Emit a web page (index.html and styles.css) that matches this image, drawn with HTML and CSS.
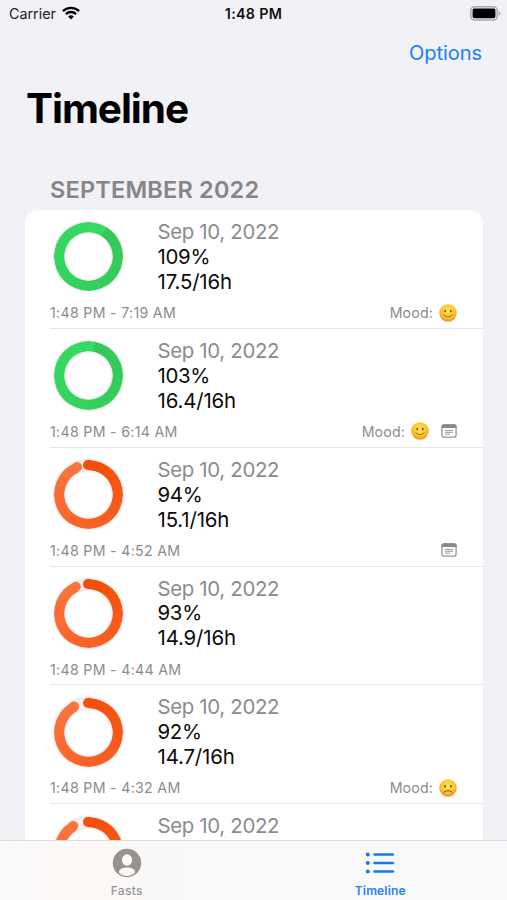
FILE: index.html
```html
<!DOCTYPE html>
<html lang="en">
<head>
<meta charset="utf-8">
<title>Timeline</title>
<link rel="stylesheet" href="styles.css">
</head>
<body>
<svg width="0" height="0" class="defs">
  <defs>
    <radialGradient id="face" cx=".5" cy=".4" r=".6">
      <stop offset="0" stop-color="#ffe45c"/><stop offset=".6" stop-color="#fdc92f"/><stop offset="1" stop-color="#f0940f"/>
    </radialGradient>
    <symbol id="smile" viewBox="0 0 18 18">
      <circle cx="9" cy="9" r="8.7" fill="url(#face)"/>
      <ellipse cx="6.3" cy="7.1" rx=".9" ry="1.3" fill="#7a4a10"/><ellipse cx="11.7" cy="7.1" rx=".9" ry="1.3" fill="#7a4a10"/>
      <path d="M4.8 11Q9 14.6 13.2 11" fill="none" stroke="#a8670f" stroke-width="1" stroke-linecap="round"/>
    </symbol>
    <symbol id="frown" viewBox="0 0 18 18">
      <circle cx="9" cy="9" r="8.7" fill="url(#face)"/>
      <ellipse cx="6" cy="7.3" rx=".9" ry="1.3" fill="#7a4a10"/><ellipse cx="12" cy="7.3" rx=".9" ry="1.3" fill="#7a4a10"/>
      <path d="M5.3 13.1Q9 10.5 12.7 13.1" fill="none" stroke="#8f560e" stroke-width="1.1" stroke-linecap="round"/>
    </symbol>
    <symbol id="note" viewBox="0 0 16 14">
      <rect x=".9" y=".9" width="14.2" height="12.2" rx="2.2" fill="none" stroke="#98989a" stroke-width="1.3"/>
      <path d="M.4 4V2.6Q.6.3 2.8.3H13.2Q15.4.3 15.6 2.6V4Z" fill="#8a8a8c"/>
      <path d="M4 6.4H12M4 8.3H12M4 10.2H9" stroke="#98989a" stroke-width="1"/>
    </symbol>
  </defs>
</svg>
<div class="screen">
  <header class="status">
    <div class="carrier"><span>Carrier</span>
      <svg width="18" height="14" viewBox="0 0 18 14" fill="none" stroke="#000" stroke-width="2.3">
        <path d="M.9 5.1A11.6 11.6 0 0 1 17.1 5.1M3.9 8.1A7.3 7.3 0 0 1 14.1 8.1"/>
        <path d="M9 13.6 6.1 10.6A4.2 4.2 0 0 1 11.9 10.6Z" fill="#000" stroke="none"/>
      </svg>
    </div>
    <div class="clock">1:48 PM</div>
    <svg class="battery" width="31" height="15" viewBox="0 0 31 15">
      <rect x=".8" y=".8" width="26.4" height="13.2" rx="3.8" fill="none" stroke="#aaaaae" stroke-width="1.5"/>
      <rect x="2.6" y="2.6" width="22.8" height="9.6" rx="1.8"/>
      <path d="M28.7 5.2Q30.5 6 30.5 7.4T28.7 9.6Z" fill="#aaaaae"/>
    </svg>
  </header>
  <nav class="navbar"><a>Options</a></nav>
  <h1>Timeline</h1>
  <h2>SEPTEMBER 2022</h2>
  <main class="card">
    <article class="row">
      <div class="top"><div class="ring done" style="--p:32deg"></div>
        <div class="facts"><p class="date">Sep 10, 2022</p><p class="pct">109%</p><p class="hours">17.5/16h</p></div></div>
      <div class="meta"><span class="span">1:48 PM - 7:19 AM</span><span class="mood">Mood: <svg class="emoji"><use href="#smile"/></svg></span></div>
    </article>
    <article class="row">
      <div class="top"><div class="ring done" style="--p:11deg"></div>
        <div class="facts"><p class="date">Sep 10, 2022</p><p class="pct">103%</p><p class="hours">16.4/16h</p></div></div>
      <div class="meta"><span class="span">1:48 PM - 6:14 AM</span><span class="mood">Mood: <svg class="emoji"><use href="#smile"/></svg><svg class="note"><use href="#note"/></svg></span></div>
    </article>
    <article class="row">
      <div class="top"><div class="ring part" style="--p:338.4deg"><i class="cap start"></i><i class="cap end"></i></div>
        <div class="facts"><p class="date">Sep 10, 2022</p><p class="pct">94%</p><p class="hours">15.1/16h</p></div></div>
      <div class="meta"><span class="span">1:48 PM - 4:52 AM</span><span class="mood"><svg class="note"><use href="#note"/></svg></span></div>
    </article>
    <article class="row">
      <div class="top"><div class="ring part" style="--p:335.5deg"><i class="cap start"></i><i class="cap end"></i></div>
        <div class="facts"><p class="date">Sep 10, 2022</p><p class="pct">93%</p><p class="hours">14.9/16h</p></div></div>
      <div class="meta"><span class="span">1:48 PM - 4:44 AM</span></div>
    </article>
    <article class="row">
      <div class="top"><div class="ring part" style="--p:332deg"><i class="cap start"></i><i class="cap end"></i></div>
        <div class="facts"><p class="date">Sep 10, 2022</p><p class="pct">92%</p><p class="hours">14.7/16h</p></div></div>
      <div class="meta"><span class="span">1:48 PM - 4:32 AM</span><span class="mood">Mood: <svg class="emoji"><use href="#frown"/></svg></span></div>
    </article>
    <article class="row">
      <div class="top"><div class="ring part" style="--p:330deg"><i class="cap start"></i><i class="cap end"></i></div>
        <div class="facts"><p class="date">Sep 10, 2022</p></div></div>
    </article>
  </main>
  <footer class="tabs">
    <div class="tab">
      <svg width="30" height="30" viewBox="0 0 30 30"><circle cx="15" cy="15" r="14.2" fill="#979390"/><ellipse cx="15" cy="12" rx="5.1" ry="5.7" fill="#fbf8f6"/><path d="M6.8 24.2C7.5 20.8 11 19.6 15 19.6S22.5 20.8 23.2 24.2C21 26.8 18 27.9 15 27.9S9 26.8 6.8 24.2Z" fill="#fbf8f6"/></svg>
      <span>Fasts</span>
    </div>
    <div class="tab active">
      <svg width="30" height="30" viewBox="0 0 30 30" fill="#1279ee"><circle cx="2.8" cy="6.5" r="2"/><circle cx="2.8" cy="15" r="2"/><circle cx="2.8" cy="23.5" r="2"/><path d="M9.3 6.5H28M9.3 15H28M9.3 23.5H28" stroke="#1279ee" stroke-width="2.3" stroke-linecap="round"/></svg>
      <span>Timeline</span>
    </div>
  </footer>
</div>
</body>
</html>
```
FILE: styles.css
```css
* { box-sizing: border-box; margin: 0; padding: 0; }
body { background: #f1f1f6; font-family: Inter, "Liberation Sans", sans-serif; color: #000; }
.defs { position: absolute; }
.screen { width: 507px; height: 900px; display: flex; flex-direction: column; overflow: hidden; }
.status { height: 27px; flex: none; display: grid; grid-template-columns: 1fr auto 1fr; align-items: center; padding: 0 7px 0 9px; font-size: 14.3px; color: #222; }
.carrier { display: flex; align-items: center; gap: 6px; letter-spacing: 0; }
.carrier svg { margin-top: -2px; }
.clock { font-weight: 600; color: #111; letter-spacing: .3px; margin-left: -2px; }
.battery { justify-self: end; margin-top: -1px; margin-right: -1px; }
.navbar { height: 52px; flex: none; padding: 0 25px; display: flex; justify-content: flex-end; align-items: center; }
.navbar a { color: #1a80f5; font-size: 20px; letter-spacing: -.05px; }
h1 { height: 60px; flex: none; padding-left: 26px; font-size: 40.5px; line-height: 59px; font-weight: 700; letter-spacing: -1.05px; }
h2 { height: 71px; flex: none; padding: 38px 0 0 50px; font-size: 23.5px; line-height: 26px; font-weight: 600; color: #85858a; letter-spacing: .2px; }
.card { flex: 1; min-height: 0; overflow: hidden; margin: 0 24px 0 25px; background: #fff; border-radius: 13px 13px 0 0; }
.row { position: relative; height: 118.85px; margin-left: 25px; padding: 10px 26px 0 0; border-bottom: 1.5px solid #e7e7e9; }
.top { display: flex; height: 79.5px; }
.facts { margin-left: 33px; font-size: 20.4px; line-height: 24.9px; color: #0c0c0c; }
.date { color: #8b8b8d; letter-spacing: -.33px; }
.pct { letter-spacing: -.3px; }
.hours { letter-spacing: -.15px; }
.ring { position: relative; width: 69px; height: 69px; margin: 2.3px 1.5px 0 4px; border-radius: 50%; filter: drop-shadow(0 0 1.5px rgba(0,0,0,.24)); }
.ring::before { content: ""; position: absolute; inset: 0; border-radius: 50%; mask: radial-gradient(circle, transparent 23.9px, #000 24.6px); }
.done::before { background: conic-gradient(from var(--p), #35c759, #34dc63); }
.part::before { background: conic-gradient(#f54e07, #fc7440 var(--p), #f3f0ee var(--p)); }
.cap { position: absolute; left: 29.4px; top: 0; width: 10.2px; height: 10.2px; border-radius: 50%; background: #f54e07; transform-origin: 5.1px 34.5px; }
.end { background: #fc7440; transform: rotate(var(--p)); }
.meta { display: flex; justify-content: space-between; align-items: center; height: 26px; font-size: 14.2px; color: #8b8b8d; letter-spacing: .3px; }
.mood { display: flex; align-items: center; letter-spacing: .15px; }
.emoji { width: 18px; height: 18px; margin-left: 6px; }
.note { width: 16px; height: 14px; margin-left: 12px; }
.tabs { height: 60px; flex: none; display: flex; border-top: 1px solid #dcdcde; background: linear-gradient(90deg, #fafafa 0, #fdf8f5 90px, #f9f9f9 180px, #f9f9f9); }
.tab { flex: 1; display: flex; flex-direction: column; align-items: center; padding-top: 7px; font-size: 12px; line-height: 14px; font-weight: 500; color: #98959a; letter-spacing: .3px; }
.tab span { margin-top: 6px; }
.active { color: #2582f4; font-weight: 600; letter-spacing: .15px; }
```
